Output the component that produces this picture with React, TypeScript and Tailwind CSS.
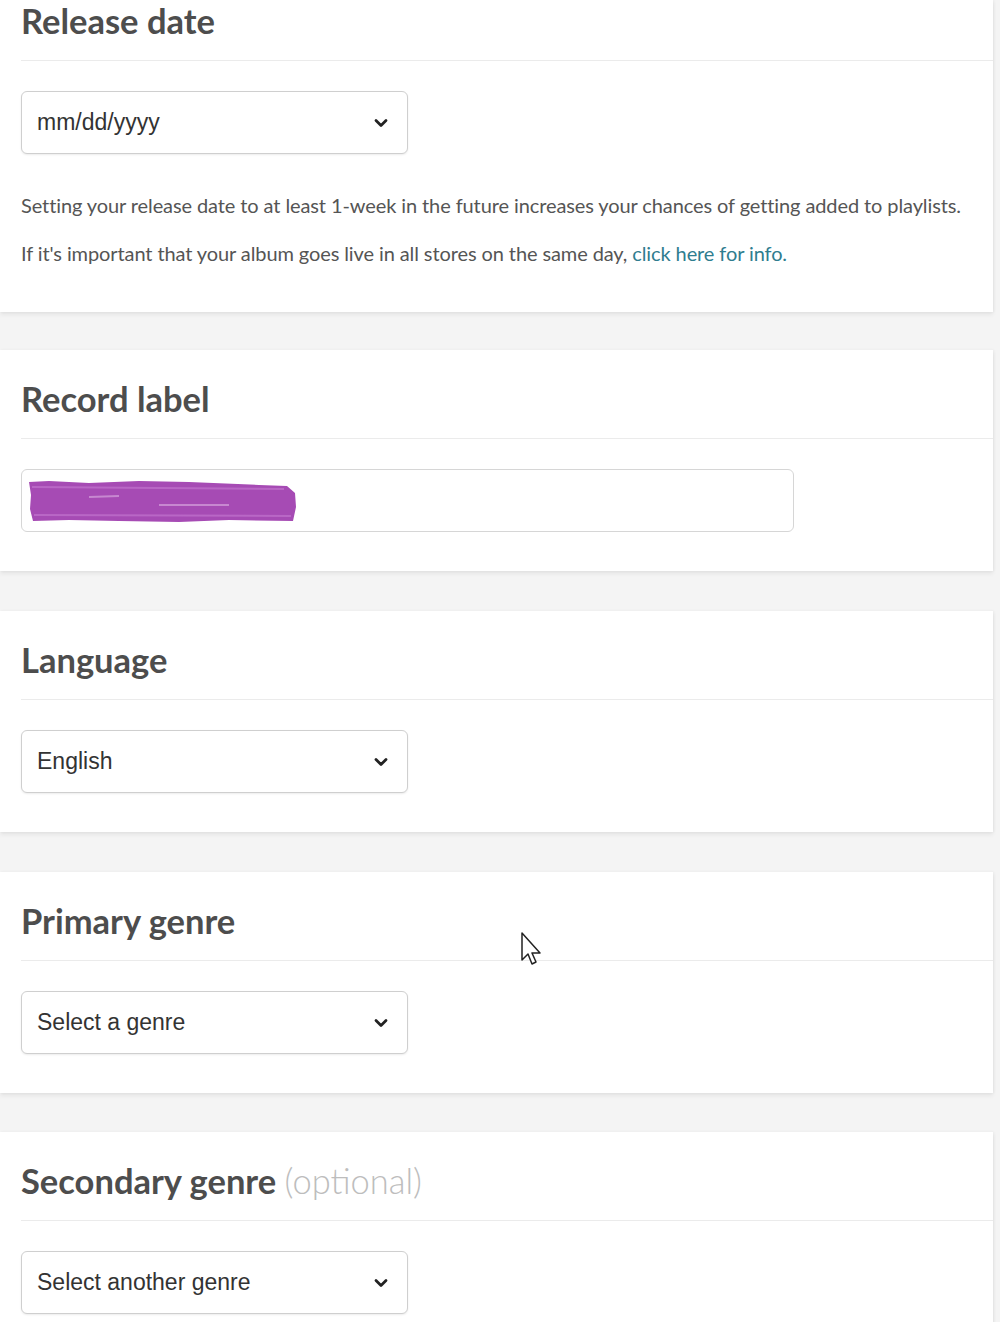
import React from "react";

const Chevron = () => (
  <svg width="14" height="10" viewBox="0 0 14 10" className="shrink-0">
    <polyline points="2,2.5 7,7.5 12,2.5" fill="none" stroke="#222" strokeWidth="2.8" strokeLinecap="round" strokeLinejoin="round" />
  </svg>
);

const Select = ({ value }: { value: string }) => (
  <div className="mt-[30px] flex h-[63px] w-[387px] items-center justify-between rounded-[6px] border border-[#cfcfcf] bg-white pl-[15px] pr-[19px] shadow-[0_1px_2px_rgba(0,0,0,0.08)]">
    <span className="text-[23px] text-[#333]" style={{ fontFamily: '"Liberation Sans", Arial, sans-serif' }}>{value}</span>
    <Chevron />
  </div>
);

const Heading = ({ children }: { children: React.ReactNode }) => (
  <>
    <h2 className="mx-[21px] h-[40px] whitespace-nowrap text-[34.5px] font-bold leading-[40px] text-[#4d4d4d]" style={{ fontFamily: 'Lato, "Open Sans", sans-serif' }}>
      {children}
    </h2>
    <div className="ml-[21px] mt-[19px] border-t border-[#ebebeb]" />
  </>
);

const Card = ({ children, className = "" }: { children: React.ReactNode; className?: string }) => (
  <div className={`mr-[7px] bg-white shadow-[0_3px_4px_rgba(0,0,0,0.06),1px_0_3px_rgba(0,0,0,0.05)] ${className}`}>{children}</div>
);

export default function App() {
  return (
    <div className="relative h-[1322px] w-[1000px] overflow-hidden bg-[#f4f4f4]" style={{ fontFamily: 'Lato, sans-serif' }}>
      <Card className="pb-[45px] pt-[1px]">
        <Heading>Release date</Heading>
        <div className="px-[21px]">
          <Select value="mm/dd/yyyy" />
          <p className="mt-[37px] whitespace-nowrap text-[20px] leading-[28px] tracking-[-0.1px] text-[#555]">
            Setting your release date to at least 1-week in the future increases your chances of getting added to playlists.
          </p>
          <p className="mt-[20px] whitespace-nowrap text-[20px] leading-[28px] tracking-[-0.1px] text-[#555]">
            If it's important that your album goes live in all stores on the same day, <span className="text-[#2f7d8f]">click here for info.</span>
          </p>
        </div>
      </Card>

      <Card className="mt-[38px] pb-[39px] pt-[29px]">
        <Heading>Record label</Heading>
        <div className="px-[21px]">
          <div className="relative mt-[30px] h-[63px] w-[773px] rounded-[6px] border border-[#d6d6d6] bg-white">
            <svg className="absolute left-[7px] top-[9px]" width="268" height="44" viewBox="0 0 268 44">
              <path d="M0,3 L20,2 L60,4 L110,2 L160,3 L230,6 L258,7 L266,14 L267,28 L264,42 L200,41 L150,43 L90,42 L40,41 L4,42 L1,30 L2,16 Z" fill="#a64bb4" />
              <path d="M3,8 L255,10 M5,36 L262,37" stroke="#c77bd2" strokeWidth="2" opacity="0.6" />
              <path d="M60,18 L90,17 M130,26 L200,26" stroke="#d6a3dd" strokeWidth="2" opacity="0.7" />
            </svg>
          </div>
        </div>
      </Card>

      <Card className="mt-[40px] pb-[39px] pt-[29px]">
        <Heading>Language</Heading>
        <div className="px-[21px]">
          <Select value="English" />
        </div>
      </Card>

      <Card className="mt-[40px] pb-[39px] pt-[29px]">
        <Heading>Primary genre</Heading>
        <div className="px-[21px]">
          <Select value="Select a genre" />
        </div>
      </Card>

      <Card className="mt-[39px] pb-[39px] pt-[29px]">
        <Heading>
          Secondary genre <span className="font-light text-[#bdbdbd]">(optional)</span>
        </Heading>
        <div className="px-[21px]">
          <Select value="Select another genre" />
        </div>
      </Card>

      <svg className="absolute left-[521px] top-[932px]" width="24" height="38" viewBox="0 0 24 38">
        <path d="M1,1 L1,28 L7,22 L11,32 L15,30 L11,21 L19,21 Z" fill="#fff" stroke="#222" strokeWidth="1.5" strokeLinejoin="round" />
      </svg>
    </div>
  );
}
